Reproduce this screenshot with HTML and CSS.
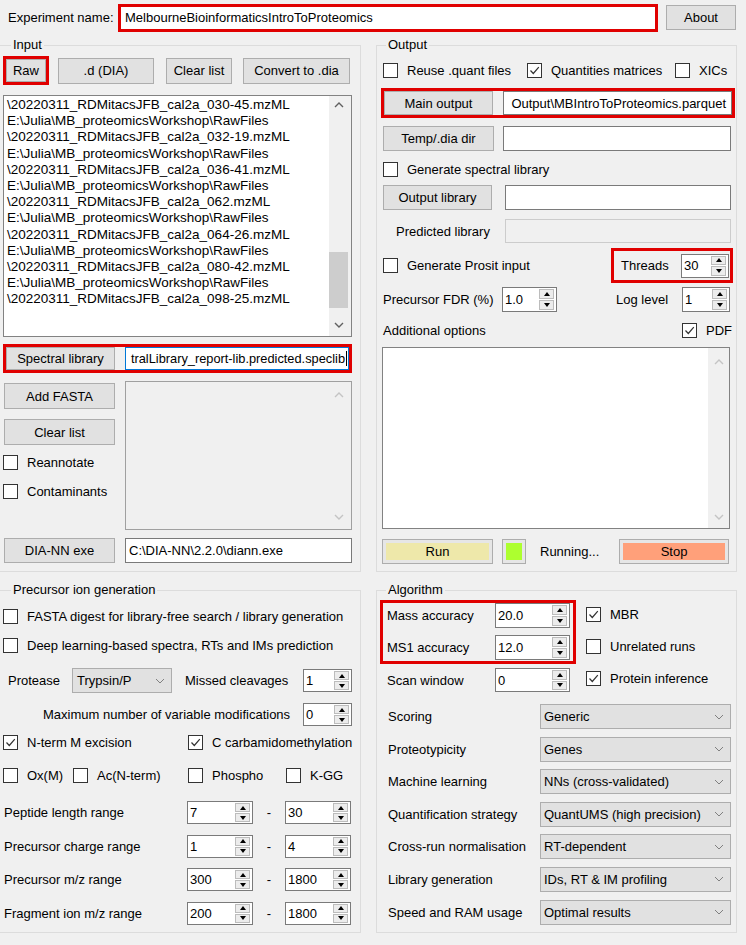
FILE: index.html
```html
<!DOCTYPE html>
<html lang="en">
<head>
<meta charset="utf-8">
<title>DIA-NN</title>
<link rel="stylesheet" href="styles.css">
</head>
<body>
<div class="app">
  <header class="topbar">
    <span class="exp-label">Experiment name:</span>
    <div class="red exp-red"><div class="exp-field">MelbourneBioinformaticsIntroToProteomics</div></div>
    <button class="btn about-btn">About</button>
  </header>

  <div class="panels">
    <!-- INPUT -->
    <fieldset class="grp grp-left">
      <legend>Input</legend>
      <div class="in-btns">
        <div class="red raw-red"><button class="btn raw-btn">Raw</button></div>
        <button class="btn d-btn">.d (DIA)</button>
        <button class="btn clr-btn">Clear list</button>
        <button class="btn conv-btn">Convert to .dia</button>
      </div>
      <div class="listbox files">
        <div class="list-lines">
          <div>\20220311_RDMitacsJFB_cal2a_030-45.mzML</div>
          <div>E:\Julia\MB_proteomicsWorkshop\RawFiles</div>
          <div>\20220311_RDMitacsJFB_cal2a_032-19.mzML</div>
          <div>E:\Julia\MB_proteomicsWorkshop\RawFiles</div>
          <div>\20220311_RDMitacsJFB_cal2a_036-41.mzML</div>
          <div>E:\Julia\MB_proteomicsWorkshop\RawFiles</div>
          <div>\20220311_RDMitacsJFB_cal2a_062.mzML</div>
          <div>E:\Julia\MB_proteomicsWorkshop\RawFiles</div>
          <div>\20220311_RDMitacsJFB_cal2a_064-26.mzML</div>
          <div>E:\Julia\MB_proteomicsWorkshop\RawFiles</div>
          <div>\20220311_RDMitacsJFB_cal2a_080-42.mzML</div>
          <div>E:\Julia\MB_proteomicsWorkshop\RawFiles</div>
          <div>\20220311_RDMitacsJFB_cal2a_098-25.mzML</div>
        </div>
        <div class="vscroll">
          <div class="sb-up"><svg class="sb-arr" viewBox="0 0 10 6"><polyline points="1,5 5,1 9,5"/></svg></div>
          <div class="sb-track"><div class="sb-thumb"></div></div>
          <div class="sb-down"><svg class="sb-arr" viewBox="0 0 10 6"><polyline points="1,1 5,5 9,1"/></svg></div>
        </div>
      </div>
      <div class="red spec-red">
        <button class="btn spec-btn">Spectral library</button>
        <div class="field spec-field endclip"><span class="caret">tralLibrary_report-lib.predicted.speclib</span></div>
      </div>
      <div class="fasta-row">
        <div class="fasta-left">
          <button class="btn fasta-add">Add FASTA</button>
          <button class="btn fasta-clr">Clear list</button>
          <label class="chk reann"><span class="cb"></span><span>Reannotate</span></label>
          <label class="chk contam"><span class="cb"></span><span>Contaminants</span></label>
        </div>
        <div class="listbox fasta-list">
          <div class="list-lines"></div>
          <div class="vscroll dim">
            <div class="sb-up"><svg class="sb-arr" viewBox="0 0 10 6"><polyline points="1,5 5,1 9,5"/></svg></div>
            <div class="sb-track"></div>
            <div class="sb-down"><svg class="sb-arr" viewBox="0 0 10 6"><polyline points="1,1 5,5 9,1"/></svg></div>
          </div>
        </div>
      </div>
      <div class="exe-row">
        <button class="btn exe-btn">DIA-NN exe</button>
        <div class="field exe-field">C:\DIA-NN\2.2.0\diann.exe</div>
      </div>
    </fieldset>

    <!-- OUTPUT -->
    <fieldset class="grp grp-right">
      <legend>Output</legend>
      <div class="out-chks">
        <label class="chk w-reuse"><span class="cb"></span><span>Reuse .quant files</span></label>
        <label class="chk w-quant"><span class="cb"><svg class="tick" viewBox="0 0 13 13"><polyline points="2.5,6.5 5.3,9.5 10.8,3.2"/></svg></span><span>Quantities matrices</span></label>
        <label class="chk"><span class="cb"></span><span>XICs</span></label>
      </div>
      <div class="red main-red">
        <button class="btn main-btn">Main output</button>
        <div class="field main-field endclip"><span>Output\MBIntroToProteomics.parquet</span></div>
      </div>
      <div class="temp-row">
        <button class="btn temp-btn">Temp/.dia dir</button>
        <div class="field temp-field"></div>
      </div>
      <label class="chk genlib"><span class="cb"></span><span>Generate spectral library</span></label>
      <div class="outlib-row">
        <button class="btn outlib-btn">Output library</button>
        <div class="field outlib-field"></div>
      </div>
      <div class="pred-row">
        <span class="pred-label">Predicted library</span>
        <div class="field disabled pred-field"></div>
      </div>
      <div class="prosit-row">
        <label class="chk prosit"><span class="cb"></span><span>Generate Prosit input</span></label>
        <div class="red threads-red">
          <span class="threads-label">Threads</span>
          <div class="num threads-num"><span class="num-val">30</span><span class="spin"><span class="sp up"></span><span class="sp dn"></span></span></div>
        </div>
      </div>
      <div class="fdr-row">
        <span class="fdr-label">Precursor FDR (%)</span>
        <div class="num fdr-num"><span class="num-val">1.0</span><span class="spin"><span class="sp up"></span><span class="sp dn"></span></span></div>
        <span class="log-label">Log level</span>
        <div class="num log-num"><span class="num-val">1</span><span class="spin"><span class="sp up"></span><span class="sp dn"></span></span></div>
      </div>
      <div class="addl-row">
        <span class="addl-label">Additional options</span>
        <label class="chk"><span class="cb"><svg class="tick" viewBox="0 0 13 13"><polyline points="2.5,6.5 5.3,9.5 10.8,3.2"/></svg></span><span>PDF</span></label>
      </div>
      <div class="addl-area">
        <div class="vscroll dim">
          <div class="sb-up"><svg class="sb-arr" viewBox="0 0 10 6"><polyline points="1,5 5,1 9,5"/></svg></div>
          <div class="sb-track"></div>
          <div class="sb-down"><svg class="sb-arr" viewBox="0 0 10 6"><polyline points="1,1 5,5 9,1"/></svg></div>
        </div>
      </div>
      <div class="run-row">
        <button class="btn run-btn">Run</button>
        <div class="status-sq"></div>
        <span class="running">Running...</span>
        <button class="btn stop-btn">Stop</button>
      </div>
    </fieldset>

    <!-- PRECURSOR ION GENERATION -->
    <fieldset class="grp grp-left">
      <legend>Precursor ion generation</legend>
      <label class="chk fd-chk"><span class="cb"></span><span>FASTA digest for library-free search / library generation</span></label>
      <label class="chk dl-chk"><span class="cb"></span><span>Deep learning-based spectra, RTs and IMs prediction</span></label>
      <div class="prot-row">
        <span class="prot-label">Protease</span>
        <div class="combo prot-combo"><span class="combo-text">Trypsin/P</span><svg class="chev" viewBox="0 0 10 6"><polyline points="1,1 5,5 9,1"/></svg></div>
        <span class="mc-label">Missed cleavages</span>
        <div class="num mc-num"><span class="num-val">1</span><span class="spin"><span class="sp up"></span><span class="sp dn"></span></span></div>
      </div>
      <div class="maxmod-row">
        <span class="maxmod-label">Maximum number of variable modifications</span>
        <div class="num mc-num"><span class="num-val">0</span><span class="spin"><span class="sp up"></span><span class="sp dn"></span></span></div>
      </div>
      <div class="nterm-row">
        <label class="chk w-nterm"><span class="cb"><svg class="tick" viewBox="0 0 13 13"><polyline points="2.5,6.5 5.3,9.5 10.8,3.2"/></svg></span><span>N-term M excision</span></label>
        <label class="chk"><span class="cb"><svg class="tick" viewBox="0 0 13 13"><polyline points="2.5,6.5 5.3,9.5 10.8,3.2"/></svg></span><span>C carbamidomethylation</span></label>
      </div>
      <div class="mods-row">
        <label class="chk w-ox"><span class="cb"></span><span>Ox(M)</span></label>
        <label class="chk w-ac"><span class="cb"></span><span>Ac(N-term)</span></label>
        <label class="chk w-phos"><span class="cb"></span><span>Phospho</span></label>
        <label class="chk"><span class="cb"></span><span>K-GG</span></label>
      </div>
      <div class="range-row first">
        <span class="range-label">Peptide length range</span>
        <div class="num range-num"><span class="num-val">7</span><span class="spin"><span class="sp up"></span><span class="sp dn"></span></span></div>
        <span class="dash">-</span>
        <div class="num range-num"><span class="num-val">30</span><span class="spin"><span class="sp up"></span><span class="sp dn"></span></span></div>
      </div>
      <div class="range-row">
        <span class="range-label">Precursor charge range</span>
        <div class="num range-num"><span class="num-val">1</span><span class="spin"><span class="sp up"></span><span class="sp dn"></span></span></div>
        <span class="dash">-</span>
        <div class="num range-num"><span class="num-val">4</span><span class="spin"><span class="sp up"></span><span class="sp dn"></span></span></div>
      </div>
      <div class="range-row">
        <span class="range-label">Precursor m/z range</span>
        <div class="num range-num"><span class="num-val">300</span><span class="spin"><span class="sp up"></span><span class="sp dn"></span></span></div>
        <span class="dash">-</span>
        <div class="num range-num"><span class="num-val">1800</span><span class="spin"><span class="sp up"></span><span class="sp dn"></span></span></div>
      </div>
      <div class="range-row">
        <span class="range-label">Fragment ion m/z range</span>
        <div class="num range-num"><span class="num-val">200</span><span class="spin"><span class="sp up"></span><span class="sp dn"></span></span></div>
        <span class="dash">-</span>
        <div class="num range-num"><span class="num-val">1800</span><span class="spin"><span class="sp up"></span><span class="sp dn"></span></span></div>
      </div>
    </fieldset>

    <!-- ALGORITHM -->
    <fieldset class="grp grp-right">
      <legend>Algorithm</legend>
      <div class="alg-top">
        <div class="alg-left">
          <div class="red acc-red">
            <div class="acc-row">
              <span class="acc-label">Mass accuracy</span>
              <div class="num acc-num"><span class="num-val">20.0</span><span class="spin"><span class="sp up"></span><span class="sp dn"></span></span></div>
            </div>
            <div class="acc-row">
              <span class="acc-label">MS1 accuracy</span>
              <div class="num acc-num"><span class="num-val">12.0</span><span class="spin"><span class="sp up"></span><span class="sp dn"></span></span></div>
            </div>
          </div>
          <div class="scan-row">
            <span class="scan-label">Scan window</span>
            <div class="num acc-num scan-num"><span class="num-val">0</span><span class="spin"><span class="sp up"></span><span class="sp dn"></span></span></div>
          </div>
        </div>
        <div class="alg-right">
          <label class="chk"><span class="cb"><svg class="tick" viewBox="0 0 13 13"><polyline points="2.5,6.5 5.3,9.5 10.8,3.2"/></svg></span><span>MBR</span></label>
          <label class="chk"><span class="cb"></span><span>Unrelated runs</span></label>
          <label class="chk"><span class="cb"><svg class="tick" viewBox="0 0 13 13"><polyline points="2.5,6.5 5.3,9.5 10.8,3.2"/></svg></span><span>Protein inference</span></label>
        </div>
      </div>
      <div class="combos">
        <div class="combo-row"><span class="combo-label">Scoring</span><div class="combo alg-combo"><span class="combo-text">Generic</span><svg class="chev" viewBox="0 0 10 6"><polyline points="1,1 5,5 9,1"/></svg></div></div>
        <div class="combo-row"><span class="combo-label">Proteotypicity</span><div class="combo alg-combo"><span class="combo-text">Genes</span><svg class="chev" viewBox="0 0 10 6"><polyline points="1,1 5,5 9,1"/></svg></div></div>
        <div class="combo-row"><span class="combo-label">Machine learning</span><div class="combo alg-combo"><span class="combo-text">NNs (cross-validated)</span><svg class="chev" viewBox="0 0 10 6"><polyline points="1,1 5,5 9,1"/></svg></div></div>
        <div class="combo-row"><span class="combo-label">Quantification strategy</span><div class="combo alg-combo"><span class="combo-text">QuantUMS (high precision)</span><svg class="chev" viewBox="0 0 10 6"><polyline points="1,1 5,5 9,1"/></svg></div></div>
        <div class="combo-row"><span class="combo-label">Cross-run normalisation</span><div class="combo alg-combo"><span class="combo-text">RT-dependent</span><svg class="chev" viewBox="0 0 10 6"><polyline points="1,1 5,5 9,1"/></svg></div></div>
        <div class="combo-row"><span class="combo-label">Library generation</span><div class="combo alg-combo"><span class="combo-text">IDs, RT &amp; IM profiling</span><svg class="chev" viewBox="0 0 10 6"><polyline points="1,1 5,5 9,1"/></svg></div></div>
        <div class="combo-row"><span class="combo-label">Speed and RAM usage</span><div class="combo alg-combo"><span class="combo-text">Optimal results</span><svg class="chev" viewBox="0 0 10 6"><polyline points="1,1 5,5 9,1"/></svg></div></div>
      </div>
    </fieldset>
  </div>
</div>
</body>
</html>
```

FILE: styles.css
```css
* { box-sizing: border-box; }
html, body { margin: 0; padding: 0; }
body {
  width: 746px; height: 945px; overflow: hidden;
  background: #f0f0f0; color: #000;
  font-family: "Liberation Sans", Arial, sans-serif;
  font-size: 13px; line-height: 15px;
}
button { font: inherit; color: inherit; margin: 0; padding: 0; }
.btn {
  display: flex; align-items: center; justify-content: center;
  background: #e1e1e1; border: 1px solid #adadad;
  height: 25px; white-space: nowrap; flex: none;
}
.red { border: 3px solid #e00000; flex: none; }
.field {
  display: flex; align-items: center; flex: none;
  background: #fff; border: 1px solid #7a7a7a;
  height: 25px; padding: 0 3px; white-space: nowrap; overflow: hidden;
}
.field.endclip { justify-content: flex-end; }
.field.endclip span { flex: none; }
.field.disabled { background: #f0f0f0; border-color: #cccccc; }
.caret { border-right: 1px solid #000; padding-right: 1px; }

/* checkbox */
.chk { display: flex; align-items: center; gap: 9px; white-space: nowrap; flex: none; }
.cb {
  width: 15px; height: 15px; flex: none;
  background: #fff; border: 1px solid #333;
  display: flex; align-items: center; justify-content: center;
}
.tick { width: 13px; height: 13px; fill: none; stroke: #333; stroke-width: 1.2; }

/* numeric up/down */
.num {
  display: flex; align-items: center; flex: none;
  background: #fff; border: 1px solid #7a7a7a; height: 24px;
}
.num-val { flex: 1; padding-left: 2px; white-space: nowrap; }
.spin {
  align-self: stretch; width: 15px; margin: 1px 2px 1px 0;
  display: flex; flex-direction: column; gap: 1px;
}
.sp {
  flex: 1; background: #ececec; border: 1px solid #bcbcbc;
  display: flex; align-items: center; justify-content: center;
}
.sp.up::after {
  content: ""; border-left: 3.5px solid transparent; border-right: 3.5px solid transparent;
  border-bottom: 4px solid #000;
}
.sp.dn::after {
  content: ""; border-left: 3.5px solid transparent; border-right: 3.5px solid transparent;
  border-top: 4px solid #000;
}

/* combo */
.combo {
  display: flex; align-items: center; flex: none;
  background: #e1e1e1; border: 1px solid #adadad;
  height: 25px; padding: 0 6px 0 4px;
}
.combo-text { flex: 1; white-space: nowrap; }
.chev { width: 10px; height: 6px; fill: none; stroke: #808080; stroke-width: 1; }

/* list boxes */
.listbox { display: flex; background: #fff; border: 1px solid #828282; flex: none; }
.list-lines {
  flex: 1; padding: 1px 0 0 3px; overflow: hidden; white-space: nowrap;
  font-size: 13.5px; line-height: 16.2px;
}
.vscroll { width: 22px; flex: none; background: #f0f0f0; display: flex; flex-direction: column; }
.sb-up, .sb-down { display: flex; align-items: center; justify-content: center; padding-right: 3px; }
.sb-track { flex: 1; display: flex; flex-direction: column; justify-content: flex-end; padding: 0 3px 6px 0; }
.sb-thumb { height: 56px; background: #cdcdcd; }
.sb-arr { width: 10px; height: 6px; fill: none; stroke: #606060; stroke-width: 1.4; }
.vscroll.dim .sb-arr { stroke: #c4c4c4; }

/* top bar */
.topbar { display: flex; align-items: center; height: 35px; }
.exp-label { margin-left: 8px; width: 110px; flex: none; }
.exp-red { width: 540px; height: 28px; display: flex; }
.exp-field { flex: 1; background: #fff; display: flex; align-items: center; padding-left: 4px; white-space: nowrap; }
.about-btn { margin-left: 8px; width: 70px; height: 25px; }

/* panels */
.panels {
  display: grid; grid-template-columns: 365px 361px; grid-template-rows: 534px 350px;
  column-gap: 15px; row-gap: 11px; margin: 3px 0 0 -4px;
}
.grp { margin: 0; padding: 0; border: 1px solid #dcdcdc; min-width: 0; }
.grp legend { margin-left: 9px; padding: 0 2px; line-height: 14px; }
.grp-left { padding-left: 5px; }

/* input group */
.in-btns { display: flex; align-items: center; height: 29px; margin-top: 4px; }
.raw-red { margin-left: 1px; width: 46px; height: 29px; display: flex; }
.raw-btn { flex: 1; height: auto; }
.d-btn { margin-left: 9px; width: 96px; height: 26px; }
.clr-btn { margin-left: 12px; width: 66px; height: 26px; }
.conv-btn { margin-left: 11px; width: 107px; height: 26px; }
.files { margin: 10px 0 0 1px; width: 349px; height: 242px; }
.files .sb-up { height: 17px; }
.files .sb-down { height: 22px; }
.spec-red { margin: 7px 0 0 1px; width: 349px; height: 29px; display: flex; align-items: center; }
.spec-btn { width: 109px; height: 23px; }
.spec-field { margin-left: 10px; width: 224px; height: 23px; border-color: #0078d7; padding: 0 1px 0 2px; font-size: 12.8px; }
.fasta-row { display: flex; margin-top: 8px; }
.fasta-left { width: 123px; flex: none; display: flex; flex-direction: column; align-items: flex-start; }
.fasta-add { margin: 2px 0 0 2px; width: 111px; height: 26px; }
.fasta-clr { margin: 10px 0 0 2px; width: 111px; height: 26px; }
.reann { margin: 10px 0 0 1px; }
.contam { margin: 14px 0 0 1px; }
.fasta-list { width: 227px; height: 149px; background: #f0f0f0; border-color: #a0a0a0; }
.fasta-list .vscroll { background: #f0f0f0; }
.fasta-list .sb-up { height: 26px; }
.fasta-list .sb-down { height: 25px; }
.exe-row { display: flex; margin-top: 8px; }
.exe-btn { margin-left: 2px; width: 111px; height: 25px; }
.exe-field { margin-left: 10px; width: 227px; height: 25px; }

/* output group */
.out-chks { display: flex; align-items: center; height: 15px; margin: 11px 0 0 6px; }
.w-reuse { width: 144px; }
.w-quant { width: 148px; }
.main-red { margin: 10px 0 0 4px; width: 354px; height: 30px; display: flex; align-items: center; }
.main-btn { width: 109px; height: 24px; }
.main-field { margin-left: 10px; width: 229px; height: 24px; padding-right: 5px; }
.temp-row { display: flex; margin: 8px 0 0 6px; }
.temp-btn { width: 111px; height: 25px; }
.temp-field { margin-left: 9px; width: 228px; }
.genlib { margin: 11px 0 0 6px; }
.outlib-row { display: flex; margin: 8px 0 0 6px; }
.outlib-btn { width: 109px; height: 25px; }
.outlib-field { margin-left: 13px; width: 226px; }
.pred-row { display: flex; align-items: center; margin-top: 9px; }
.pred-label { width: 128px; padding-left: 19px; flex: none; }
.pred-field { width: 226px; height: 24px; }
.prosit-row { display: flex; align-items: center; height: 35px; margin-top: 5px; }
.prosit { margin-left: 6px; width: 228px; }
.threads-red { width: 122px; height: 35px; display: flex; align-items: center; }
.threads-label { margin-left: 7px; width: 60px; flex: none; }
.threads-num { width: 48px; height: 24px; }
.fdr-row { display: flex; align-items: center; height: 25px; margin-top: 4px; }
.fdr-label { margin-left: 6px; width: 119px; flex: none; }
.fdr-num { width: 55px; height: 25px; }
.log-label { margin-left: 59px; width: 66px; flex: none; }
.log-num { width: 48px; height: 25px; }
.addl-row { display: flex; align-items: center; height: 15px; margin-top: 11px; }
.addl-label { margin-left: 6px; width: 299px; flex: none; }
.addl-area {
  margin: 9px 0 0 5px; width: 348px; height: 182px;
  background: #fff; border: 1px solid #828282; display: flex; justify-content: flex-end;
}
.addl-area .vscroll { width: 21px; }
.addl-area .sb-up { height: 28px; padding-right: 0; }
.addl-area .sb-down { height: 22px; padding-right: 0; }
.run-row { display: flex; align-items: center; height: 25px; margin: 10px 0 0 5px; }
.run-btn { width: 111px; height: 25px; background: #eee8aa; box-shadow: inset 0 0 0 3px #e6e6e6; }
.status-sq {
  margin-left: 9px; width: 24px; height: 25px; flex: none;
  background: #adff2f; border: 1px solid #adadad; box-shadow: inset 0 0 0 3px #e6e6e6;
}
.running { margin-left: 14px; width: 79px; flex: none; }
.stop-btn { width: 110px; height: 25px; background: #ffa07a; box-shadow: inset 0 0 0 3px #e6e6e6; }

/* precursor group */
.fd-chk { margin: 12px 0 0 1px; }
.dl-chk { margin: 14px 0 0 1px; }
.prot-row { display: flex; align-items: center; height: 25px; margin-top: 15px; }
.prot-label { margin-left: 6px; width: 64px; flex: none; }
.prot-combo { width: 100px; }
.mc-label { margin-left: 13px; width: 118px; flex: none; }
.mc-num { width: 49px; height: 23px; }
.maxmod-row { display: flex; align-items: center; height: 23px; margin-top: 10px; }
.maxmod-label { margin-left: 41px; width: 260px; flex: none; }
.nterm-row { display: flex; align-items: center; height: 15px; margin: 9px 0 0 1px; }
.w-nterm { width: 185px; }
.mods-row { display: flex; align-items: center; height: 15px; margin: 18px 0 0 1px; }
.w-ox { width: 70px; }
.w-ac { width: 115px; }
.w-phos { width: 98px; }
.range-row { display: flex; align-items: center; height: 23px; margin-top: 10.5px; }
.range-row.first { margin-top: 18px; }
.range-label { margin-left: 2px; width: 183px; flex: none; }
.range-num { width: 66px; height: 23px; }
.dash { width: 32px; text-align: center; flex: none; }

/* algorithm group */
.alg-top { display: flex; }
.alg-left { width: 200px; flex: none; }
.acc-red { margin: 3px 0 0 3px; width: 196px; height: 64px; display: flex; flex-direction: column; gap: 7px; }
.acc-row { display: flex; align-items: center; height: 25px; }
.acc-label { width: 112px; padding-left: 4px; flex: none; }
.acc-num { width: 75px; height: 25px; }
.scan-row { display: flex; align-items: center; height: 24px; margin-top: 4px; }
.scan-label { margin-left: 10px; width: 108px; flex: none; }
.scan-num { height: 24px; }
.alg-right { margin-left: 9px; padding-top: 10px; display: flex; flex-direction: column; gap: 17px; }
.combos { display: flex; flex-direction: column; gap: 7.6px; margin-top: 12px; }
.combo-row { display: flex; align-items: center; height: 25px; }
.combo-label { margin-left: 11px; width: 152px; flex: none; white-space: nowrap; }
.alg-combo { width: 191px; padding-left: 3px; }
```
